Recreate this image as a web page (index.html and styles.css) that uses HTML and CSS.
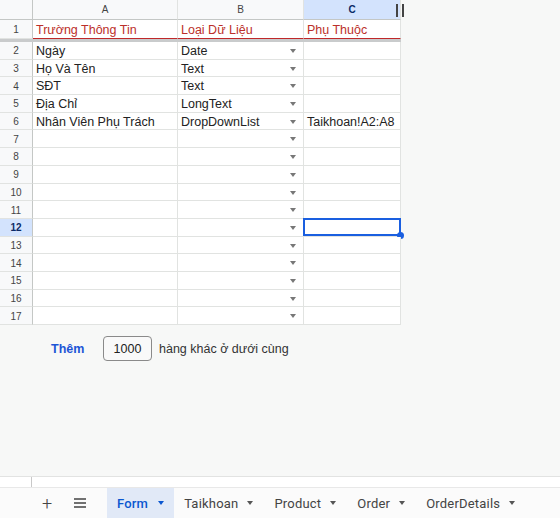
FILE: index.html
```html
<!DOCTYPE html>
<html lang="vi">
<head>
<meta charset="utf-8">
<title>Form</title>
<link rel="stylesheet" href="styles.css">
</head>
<body>
<div class="app">
  <div class="sheet">
    <div class="row head">
      <div class="rh corner"></div>
      <div class="ch">A</div>
      <div class="ch">B</div>
      <div class="ch ch-sel">C<span class="resize"></span></div>
    </div>
    <div class="row r1">
      <div class="rh">1</div>
      <div class="cell title">Trường Thông Tin</div>
      <div class="cell title">Loại Dữ Liệu</div>
      <div class="cell title">Phụ Thuộc</div>
    </div>
    <div class="freeze"></div>
    <div class="row"><div class="rh">2</div><div class="cell">Ngày</div><div class="cell dd">Date</div><div class="cell"></div></div>
    <div class="row"><div class="rh">3</div><div class="cell">Họ Và Tên</div><div class="cell dd">Text</div><div class="cell"></div></div>
    <div class="row"><div class="rh">4</div><div class="cell">SĐT</div><div class="cell dd">Text</div><div class="cell"></div></div>
    <div class="row"><div class="rh">5</div><div class="cell">Địa Chỉ</div><div class="cell dd">LongText</div><div class="cell"></div></div>
    <div class="row"><div class="rh">6</div><div class="cell">Nhân Viên Phụ Trách</div><div class="cell dd">DropDownList</div><div class="cell">Taikhoan!A2:A8</div></div>
    <div class="row"><div class="rh">7</div><div class="cell"></div><div class="cell dd"></div><div class="cell"></div></div>
    <div class="row"><div class="rh">8</div><div class="cell"></div><div class="cell dd"></div><div class="cell"></div></div>
    <div class="row"><div class="rh">9</div><div class="cell"></div><div class="cell dd"></div><div class="cell"></div></div>
    <div class="row"><div class="rh">10</div><div class="cell"></div><div class="cell dd"></div><div class="cell"></div></div>
    <div class="row"><div class="rh">11</div><div class="cell"></div><div class="cell dd"></div><div class="cell"></div></div>
    <div class="row"><div class="rh rh-sel">12</div><div class="cell"></div><div class="cell dd"></div><div class="cell selected"></div></div>
    <div class="row"><div class="rh">13</div><div class="cell"></div><div class="cell dd"></div><div class="cell"></div></div>
    <div class="row"><div class="rh">14</div><div class="cell"></div><div class="cell dd"></div><div class="cell"></div></div>
    <div class="row"><div class="rh">15</div><div class="cell"></div><div class="cell dd"></div><div class="cell"></div></div>
    <div class="row"><div class="rh">16</div><div class="cell"></div><div class="cell dd"></div><div class="cell"></div></div>
    <div class="row"><div class="rh">17</div><div class="cell"></div><div class="cell dd"></div><div class="cell"></div></div>
  </div>

  <div class="addrow">
    <span class="add-btn">Thêm</span>
    <span class="add-input">1000</span>
    <span class="add-text">hàng khác ở dưới cùng</span>
  </div>

  <div class="spacer"></div>

  <div class="hscroll"><div class="hs-left"></div></div>

  <div class="tabs">
    <span class="tb-icon plus">+</span>
    <span class="tb-icon menu">
      <svg width="12" height="10" viewBox="0 0 12 10"><path d="M0 1h12M0 5h12M0 9h12" stroke="#444" stroke-width="1.4"/></svg>
    </span>
    <div class="tab active">Form<span class="arrow"></span></div>
    <div class="tab">Taikhoan<span class="arrow"></span></div>
    <div class="tab">Product<span class="arrow"></span></div>
    <div class="tab">Order<span class="arrow"></span></div>
    <div class="tab">OrderDetails<span class="arrow"></span></div>
  </div>
</div>
</body>
</html>
```

FILE: styles.css
```css
* { box-sizing: border-box; }
html, body { margin: 0; padding: 0; }
body {
  background: #f7f8f7;
  font-family: "Liberation Sans", Arial, sans-serif;
  color: #222;
}
.app {
  height: 518px;
  width: 560px;
  display: flex;
  flex-direction: column;
  overflow: hidden;
}
.sheet {
  width: 401px;
  display: flex;
  flex-direction: column;
}
.row {
  display: grid;
  grid-template-columns: 33px 145px 126px 97px;
  height: 17.7px;
}
.row.head { height: 20px; }
.row.r1 { height: 19px; }
.rh {
  background: #f8f9fa;
  border-right: 1px solid #c4c7c5;
  border-bottom: 1px solid #e1e3e1;
  font-size: 10px;
  color: #444;
  display: flex;
  align-items: center;
  justify-content: center;
  padding-top: 1px;
}
.rh-sel {
  background: #d3e3fd;
  color: #0b2a66;
  font-weight: bold;
}
.corner { border-bottom: 1px solid #c4c7c5; }
.ch {
  background: #f8f9fa;
  border-right: 1px solid #e1e3e1;
  border-bottom: 1px solid #c4c7c5;
  font-size: 10px;
  color: #444;
  display: flex;
  align-items: center;
  justify-content: center;
  position: relative;
}
.ch-sel {
  background: #d3e3fd;
  color: #0b2a66;
  font-weight: bold;
}
.resize {
  position: absolute;
  right: -4px;
  top: 4px;
  width: 8px;
  height: 13px;
  border-left: 2px solid #444;
  border-right: 2px solid #444;
}
.cell {
  background: #fff;
  border-right: 1px solid #e1e3e1;
  border-bottom: 1px solid #e1e3e1;
  font-size: 12.5px;
  line-height: 18.5px;
  padding-left: 3px;
  white-space: nowrap;
  overflow: hidden;
  position: relative;
}
.r1 .cell {
  border-bottom: 1.5px solid #c0282a;
  line-height: 20px;
}
.r1 .rh { border-bottom: 1px solid #e1e3e1; }
.title { color: #bb2f2a; }
.freeze {
  height: 3px;
  background: #c9cbcc;
}
.dd::after {
  content: "";
  position: absolute;
  right: 7px;
  top: 7px;
  border-left: 3.5px solid transparent;
  border-right: 3.5px solid transparent;
  border-top: 4px solid #777;
}
.selected { overflow: visible; }
.selected::before {
  content: "";
  position: absolute;
  left: -1px;
  top: -1px;
  right: -1px;
  bottom: 0;
  border: 2px solid #1a5fe0;
}
.selected::after {
  content: "";
  position: absolute;
  right: -4px;
  bottom: -3px;
  width: 7px;
  height: 7px;
  border-radius: 50%;
  background: #1a5fe0;
}
.addrow {
  display: flex;
  align-items: center;
  height: 25px;
  margin-top: 11px;
  padding-left: 51px;
  font-size: 12.5px;
}
.add-btn {
  color: #1c55d6;
  font-weight: bold;
  width: 52px;
}
.add-input {
  width: 49px;
  height: 25px;
  border: 1px solid #8a8a8a;
  border-radius: 4px;
  display: flex;
  align-items: center;
  justify-content: center;
  color: #222;
  background: #f9f9f9;
}
.add-text {
  margin-left: 7px;
  color: #333;
}
.spacer { flex: 1; }
.hscroll {
  height: 11px;
  background: #fff;
  border-top: 1px solid #e2e3e2;
  display: flex;
}
.hs-left {
  width: 32px;
  border-right: 1px solid #c8c8c8;
}
.tabs {
  height: 31px;
  background: #fbfbfb;
  border-top: 1px solid #e8e8e8;
  display: flex;
  align-items: stretch;
  font-family: Roboto, "Liberation Sans", sans-serif;
  font-size: 13px;
  color: #444;
}
.tb-icon {
  display: flex;
  align-items: center;
  justify-content: center;
}
.plus {
  margin-left: 40px;
  width: 14px;
  font-size: 18px;
  font-weight: 300;
  color: #444;
}
.menu {
  margin-left: 19px;
  width: 14px;
}
.tab {
  display: flex;
  align-items: center;
  padding: 0 11px 0 10px;
  gap: 9px;
  letter-spacing: 0.2px;
}
.menu + .tab { margin-left: 20px; }
.tab.active {
  background: #e1e9f7;
  color: #0b57d0;
  font-weight: 500;
  padding: 0 10px 0 10px;
  gap: 10px;
}
.arrow {
  width: 0;
  height: 0;
  border-left: 3.5px solid transparent;
  border-right: 3.5px solid transparent;
  border-top: 4px solid #555;
}
.tab.active .arrow { border-top-color: #0b57d0; }
```
